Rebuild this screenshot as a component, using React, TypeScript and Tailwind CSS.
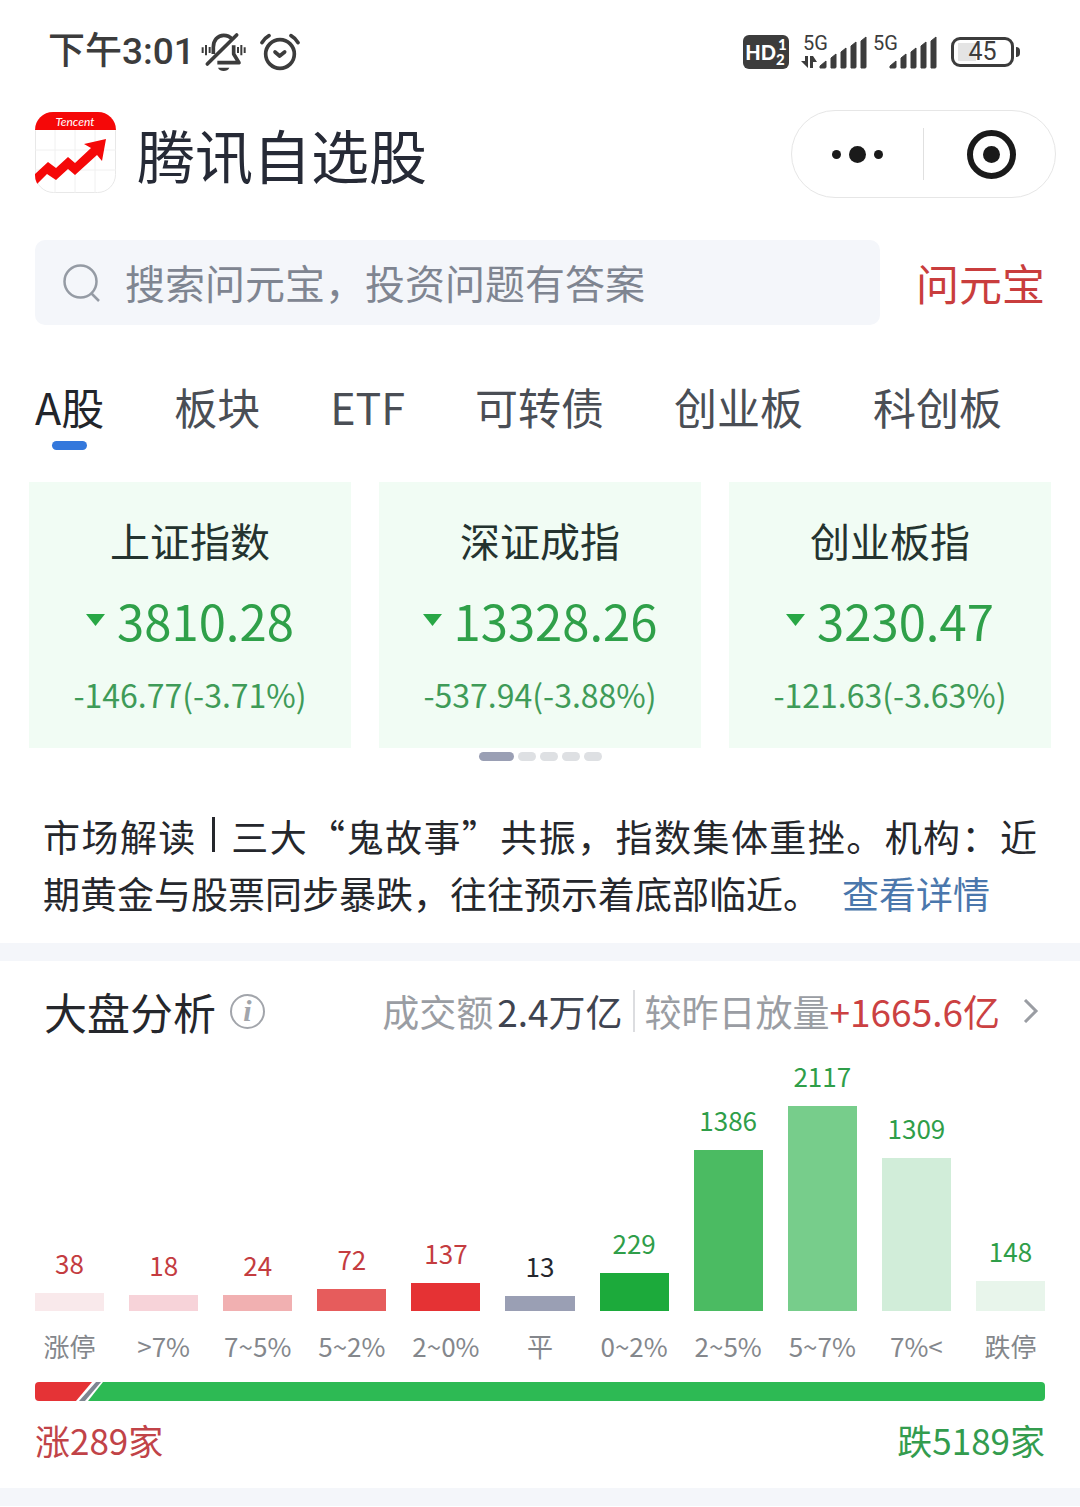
import { useState } from "react";

const TABS = ["A股", "板块", "ETF", "可转债", "创业板", "科创板"];

const INDEXES = [
  { name: "上证指数", value: "3810.28", change: "-146.77(-3.71%)" },
  { name: "深证成指", value: "13328.26", change: "-537.94(-3.88%)" },
  { name: "创业板指", value: "3230.47", change: "-121.63(-3.63%)" },
];

const RANGES = [
  { label: "涨停", count: 38, text: "text-[#c43c40]", bar: "h-[18px] bg-[#f9e9eb]" },
  { label: ">7%", count: 18, text: "text-[#c43c40]", bar: "h-[16px] bg-[#f7d3d9]" },
  { label: "7~5%", count: 24, text: "text-[#c43c40]", bar: "h-[16px] bg-[#f1b0b1]" },
  { label: "5~2%", count: 72, text: "text-[#c43c40]", bar: "h-[22px] bg-[#e65c5c]" },
  { label: "2~0%", count: 137, text: "text-[#c43c40]", bar: "h-[28px] bg-[#e53234]" },
  { label: "平", count: 13, text: "text-[#25272e]", bar: "h-[15px] bg-[#9a9fb4]" },
  { label: "0~2%", count: 229, text: "text-[#2f9e49]", bar: "h-[38px] bg-[#1caa3b]" },
  { label: "2~5%", count: 1386, text: "text-[#2f9e49]", bar: "h-[161px] bg-[#4bbb62]" },
  { label: "5~7%", count: 2117, text: "text-[#2f9e49]", bar: "h-[205px] bg-[#77cd8b]" },
  { label: "7%<", count: 1309, text: "text-[#2f9e49]", bar: "h-[153px] bg-[#d1edd9]" },
  { label: "跌停", count: 148, text: "text-[#2f9e49]", bar: "h-[30px] bg-[#e8f5eb]" },
];

function MutedBell() {
  return (
    <svg className="h-10 w-[46px]" viewBox="514 38 138 120" fill="none" stroke="#3c3c3c" strokeWidth="11" aria-hidden="true">
      <path d="M551 104V84c0-22 14-36 31-36 10 0 19 4 25 11" />
      <path d="M612 78v26l16 26h-65" strokeLinejoin="round" />
      <path d="M533 134 621 47" strokeLinecap="round" />
      <path d="M565 145h34c-5 13-29 13-34 0Z" fill="#3c3c3c" stroke="none" />
      <path d="M519 84v17M529 77v31M540 83v18M625 83v18M635 77v31M645 84v17" strokeWidth="6" />
    </svg>
  );
}

function AlarmClock() {
  return (
    <svg className="h-[38px] w-10" viewBox="692 38 120 114" fill="none" stroke="#3c3c3c" strokeWidth="11" strokeLinecap="round" aria-hidden="true">
      <circle cx="752" cy="101" r="43" />
      <path d="M698 67c5-9 12-16 21-21M806 67c-5-9-12-16-21-21" />
      <path d="m737 95 14 12 15-12" strokeLinejoin="round" />
    </svg>
  );
}

function Signal({ data = false }: { data?: boolean }) {
  return (
    <svg className="h-[44px] w-[66px]" viewBox="0 -4 66 44" fill="#3c3c3c" aria-hidden="true">
      <text x="2" y="16" fontFamily="Roboto" fontSize="20">5G</text>
      {data && <path d="M4 22h3v12L0 27h4ZM9 34V22h3v0l4 6h-4v6Z" />}
      <path d="M19 34v-2l6-5v6q0 1-1 1ZM30 34V24l5-4v13q0 1-1 1ZM40 34V18l5-4v19q0 1-1 1ZM50 34V12l5-4v25q0 1-1 1ZM60 34V7l5-4v30q0 1-1 1Z" stroke="#3c3c3c" strokeWidth="1" />
    </svg>
  );
}

function StatusBar() {
  return (
    <div className="flex h-[104px] items-center pr-[60px] pl-12 font-[Roboto,'Noto_Sans_CJK_SC',sans-serif] text-[#3c3c3c]">
      <span className="text-[37px] leading-[48px] font-medium">下午3:01</span>
      <span className="ml-1.5 flex items-center gap-[13px]">
        <MutedBell />
        <AlarmClock />
      </span>
      <span className="ml-auto flex h-[34px] w-[46px] items-center justify-center rounded-md bg-[#3c3c3c] font-[Lato,sans-serif] text-white">
        <span className="text-[20px] leading-none font-black">HD</span>
        <span className="flex flex-col text-[15px] leading-[15px] font-black">
          <span className="pl-0.5">1</span>
          <span>2</span>
        </span>
      </span>
      <span className="ml-3 flex gap-1">
        <Signal data />
        <Signal />
      </span>
      <span className="ml-[14px] flex items-center gap-0.5">
        <span className="flex h-[30px] w-[63px] items-center justify-center rounded-[9px] border-3 border-[#3c3c3c] bg-[linear-gradient(#e4e4e4,#e4e4e4)] bg-size-[18px_18px] bg-position-[4px_3px] bg-no-repeat text-[25px] leading-[30px]">
          45
        </span>
        <span className="h-[10px] w-1 rounded-r-sm bg-[#3c3c3c]" />
      </span>
    </div>
  );
}

function AppLogo() {
  return (
    <svg className="mb-1 h-[81px] w-[81px]" viewBox="0 0 81 81" role="img" aria-label="Tencent">
      <defs>
        <clipPath id="logo-clip">
          <rect width="81" height="81" rx="18" />
        </clipPath>
      </defs>
      <rect x=".5" y=".5" width="80" height="80" rx="18" fill="#fff" stroke="#e8e8e8" />
      <g clipPath="url(#logo-clip)">
        <path d="M20 18v63M40 18v63M60 18v63M0 38h81M0 58h81" stroke="#f0f0f0" />
        <rect width="81" height="18" fill="#f50808" />
        <path d="M0 62 13 50 21 56 33 45 40 51 56 36 49 32 71 27 67 49 62 43 40 63 33 57 21 68 12 62 2 72 0 70Z" fill="#f50808" />
      </g>
      <text x="40" y="14" textAnchor="middle" fill="#fff" fontFamily="Lato" fontSize="12" fontStyle="italic">Tencent</text>
    </svg>
  );
}

function Header() {
  return (
    <header className="flex items-center pt-1.5 pr-6 pl-[35px]">
      <AppLogo />
      <h1 className="ml-[21px] text-[58px] leading-[84px] text-[#262a36]">腾讯自选股</h1>
      <div className="ml-auto flex h-[88px] w-[265px] items-center rounded-full border border-[#e6e6e6]">
        <button type="button" aria-label="更多" className="flex w-[131px] items-center justify-center gap-2">
          <span className="h-[9px] w-[9px] rounded-full bg-[#1a1a1a]" />
          <span className="h-[17px] w-[17px] rounded-full bg-[#1a1a1a]" />
          <span className="h-[9px] w-[9px] rounded-full bg-[#1a1a1a]" />
        </button>
        <span className="h-[52px] w-px bg-[#e0e0e0]" />
        <button type="button" aria-label="关闭" className="flex flex-1 justify-center pl-1">
          <span className="flex h-[49px] w-[49px] items-center justify-center rounded-full border-6 border-[#1a1a1a]">
            <span className="h-[17px] w-[17px] rounded-full bg-[#1a1a1a]" />
          </span>
        </button>
      </div>
    </header>
  );
}

function SearchRow() {
  return (
    <div className="mt-[42px] flex items-center gap-9 px-[35px]">
      <label className="flex h-[85px] min-w-0 flex-1 items-center rounded-[10px] bg-[#f4f6fa] pl-7">
        <svg className="h-[38px] w-[38px]" viewBox="0 0 38 38" fill="none" stroke="#959ba4" strokeWidth="2.5" aria-hidden="true">
          <circle cx="17.500" cy="17.500" r="16" />
          <path d="m28 29 8 8" />
        </svg>
        <input
          type="search"
          aria-label="搜索"
          placeholder="搜索问元宝，投资问题有答案"
          className="ml-6 h-[64px] min-w-0 flex-1 bg-transparent pb-0.5 text-[40px] text-[#262a36] outline-none placeholder:text-[#7f8591]"
        />
      </label>
      <a href="#yuanbao" className="pb-0.5 text-[43px] leading-[60px] text-[#c93d3d]">问元宝</a>
    </div>
  );
}

function MarketTabs() {
  const [active, setActive] = useState("A股");

  return (
    <nav className="mt-[54px] flex gap-[70px] px-[35px]">
      {TABS.map((tab) => (
        <button
          key={tab}
          type="button"
          onClick={() => setActive(tab)}
          className={
            tab === active
              ? "flex flex-col items-center gap-2 whitespace-nowrap text-[#22252b]"
              : "flex flex-col items-center gap-2 whitespace-nowrap text-[#4a4e55]"
          }
        >
          <span className="text-[43px] leading-[54px]">{tab}</span>
          <span className={tab === active ? "h-[9px] w-[35px] rounded-full bg-[#3478dc]" : "h-[9px]"} />
        </button>
      ))}
    </nav>
  );
}

function IndexCards() {
  return (
    <section className="mt-8">
      <div className="grid grid-cols-3 gap-7 px-[29px]">
        {INDEXES.map((item) => (
          <div key={item.name} className="flex flex-col items-center bg-[#f1fcf4] pt-7 pb-8">
            <h2 className="text-[40px] leading-[60px] text-[#24332f]">{item.name}</h2>
            <p className="mt-5 flex items-center gap-3 text-[49px] leading-[60px] text-[#2fa049]">
              <svg className="h-3 w-[19px]" viewBox="0 0 19 12" fill="#28a745" aria-hidden="true">
                <path d="M0 0h19L9.500 12Z" />
              </svg>
              {item.value}
            </p>
            <p className="mt-[22px] text-[32px] leading-[44px] text-[#3f9b58]">{item.change}</p>
          </div>
        ))}
      </div>
      <div className="mt-1 flex justify-center gap-1">
        <span className="h-[9px] w-[35px] rounded-full bg-[#9a9fb4]" />
        {[1, 2, 3, 4].map((page) => (
          <span key={page} className="h-[9px] w-[18px] rounded-full bg-[#dee0e3]" />
        ))}
      </div>
    </section>
  );
}

function MarketNews() {
  return (
    <p className="mt-[47px] px-[43px] text-justify text-[37px] leading-[57px] text-[#25272c]">
      市场解读
      <span className="mx-[15px] inline-block h-[35px] w-[3px] bg-[#25272c]" />
      三大“鬼故事”共振，指数集体重挫。机构：近期黄金与股票同步暴跌，往往预示着底部临近。
      <a href="#detail" className="ml-[22px] text-[#4a77ac]">查看详情</a>
    </p>
  );
}

function MarketAnalysis() {
  return (
    <section className="px-[35px] pt-5 pb-[23px]">
      <div className="flex items-center pl-[9px]">
        <h2 className="text-[43px] leading-[60px] text-[#25272c]">大盘分析</h2>
        <button
          type="button"
          aria-label="说明"
          className="ml-[14px] flex h-[35px] w-[35px] items-center justify-center rounded-full border-2 border-[#a2a5ab] font-['Liberation_Serif',serif] text-[30px] leading-none font-bold text-[#a2a5ab] italic"
        >
          i
        </button>
        <a href="#turnover" className="ml-auto flex items-center text-[37px] leading-[60px] whitespace-nowrap text-[#9a9da3]">
          成交额
          <span className="ml-1 text-[#3f4450]">2.4万亿</span>
          <span className="mx-[10px] h-[42px] w-0.5 bg-[#dcdde0]" />
          较昨日放量
          <span className="text-[#cb4142]">+1665.6亿</span>
          <svg className="mr-1.5 ml-[23px] h-6 w-4" viewBox="0 0 16 24" fill="none" stroke="#9a9da3" strokeWidth="3" aria-hidden="true">
            <path d="m2 1 11 11L2 23" />
          </svg>
        </a>
      </div>

      <div className="flex h-[270px] items-end gap-[25px]">
        {RANGES.map((range) => (
          <div key={range.label} className="flex flex-1 flex-col items-center">
            <span className={`${range.text} mb-3 text-[26px] leading-9`}>{range.count}</span>
            <div className={`${range.bar} w-full`} />
          </div>
        ))}
      </div>
      <div className="mt-[17px] flex gap-[25px]">
        {RANGES.map((range) => (
          <div key={range.label} className="flex flex-1 justify-center text-[26px] leading-9 whitespace-nowrap text-[#84878c]">
            {range.label}
          </div>
        ))}
      </div>

      {/* Rise / fall ratio */}
      <div className="mt-[18px] flex h-[19px] overflow-hidden rounded">
        <div className="w-[41px] bg-[#e53336]" />
        <svg className="h-[19px] w-7" viewBox="0 0 28 19" aria-hidden="true">
          <path d="M0 0h16L0 19Z" fill="#e53336" />
          <path d="M20 0h5L9 19H3Z" fill="#7f8591" />
          <path d="M28 0v19H12L27 0Z" fill="#2dba54" />
        </svg>
        <div className="flex-1 bg-[#2dba54]" />
      </div>
      <div className="mt-[14px] flex justify-between text-[35px] leading-[50px]">
        <span className="text-[#c14348]">涨289家</span>
        <span className="text-[#339c4e]">跌5189家</span>
      </div>
    </section>
  );
}

export default function App() {
  return (
    <main lang="zh-CN" className="bg-white font-['Noto_Sans_CJK_SC',sans-serif]">
      <StatusBar />
      <Header />
      <SearchRow />
      <MarketTabs />
      <IndexCards />
      <MarketNews />
      <div className="mt-[21px] h-[18px] bg-[#f4f6fa]" />
      <MarketAnalysis />
      <div className="h-[18px] bg-[#f4f6fa]" />
    </main>
  );
}
